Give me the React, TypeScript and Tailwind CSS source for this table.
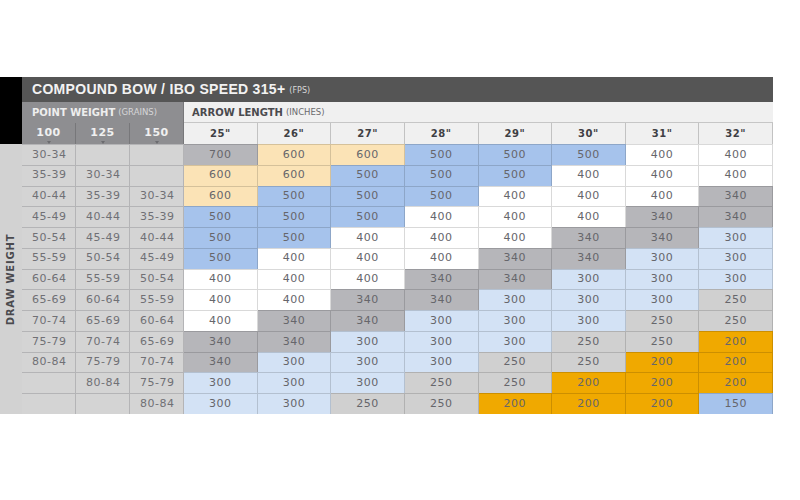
import React from 'react';

type Cell = number;

const ROWS: { w: [string, string, string]; v: Cell[] }[] = [
  { w: ['30-34', '', ''], v: [700, 600, 600, 500, 500, 500, 400, 400] },
  { w: ['35-39', '30-34', ''], v: [600, 600, 500, 500, 500, 400, 400, 400] },
  { w: ['40-44', '35-39', '30-34'], v: [600, 500, 500, 500, 400, 400, 400, 340] },
  { w: ['45-49', '40-44', '35-39'], v: [500, 500, 500, 400, 400, 400, 340, 340] },
  { w: ['50-54', '45-49', '40-44'], v: [500, 500, 400, 400, 400, 340, 340, 300] },
  { w: ['55-59', '50-54', '45-49'], v: [500, 400, 400, 400, 340, 340, 300, 300] },
  { w: ['60-64', '55-59', '50-54'], v: [400, 400, 400, 340, 340, 300, 300, 300] },
  { w: ['65-69', '60-64', '55-59'], v: [400, 400, 340, 340, 300, 300, 300, 250] },
  { w: ['70-74', '65-69', '60-64'], v: [400, 340, 340, 300, 300, 300, 250, 250] },
  { w: ['75-79', '70-74', '65-69'], v: [340, 340, 300, 300, 300, 250, 250, 200] },
  { w: ['80-84', '75-79', '70-74'], v: [340, 300, 300, 300, 250, 250, 200, 200] },
  { w: ['', '80-84', '75-79'], v: [300, 300, 300, 250, 250, 200, 200, 200] },
  { w: ['', '', '80-84'], v: [300, 300, 250, 250, 200, 200, 200, 150] },
];

const LENGTHS = ['25"', '26"', '27"', '28"', '29"', '30"', '31"', '32"'];

const COLOR: Record<number, string> = {
  700: 'bg-[#b6b6ba]',
  600: 'bg-[#fbe3b6]',
  500: 'bg-[#a6c3ec]',
  400: 'bg-white',
  340: 'bg-[#b6b6ba]',
  300: 'bg-[#d3e2f5]',
  250: 'bg-[#d0d0d0]',
  200: 'bg-[#f0a900]',
  150: 'bg-[#a6c3ec]',
};

export default function App() {
  return (
    <div className="w-[800px] h-[500px] bg-white pt-[77px]" style={{ fontFamily: "'DejaVu Sans', sans-serif" }}>
      <div className="flex w-[773px]">
        {/* left rail */}
        <div className="w-[22px] flex flex-col shrink-0">
          <div className="h-[67px] bg-black" />
          <div className="h-[270px] bg-[#d2d2d2] flex items-center justify-center">
            <span className="-rotate-90 whitespace-nowrap text-[10px] font-bold tracking-[0.8px] text-[#4a4a4e]">
              DRAW WEIGHT
            </span>
          </div>
        </div>

        {/* table */}
        <div className="flex-1 grid grid-cols-[54px_54px_54px_repeat(8,1fr)]">
          <div className="col-span-11 h-[25px] bg-[#555555] flex items-center pl-[10px] text-[#f2f2f2]">
            <span className="text-[14px] font-bold tracking-[0.3px] font-['Liberation_Sans',sans-serif]">
              COMPOUND BOW / IBO SPEED 315+
            </span>
            <span className="text-[8px] ml-[4px] mt-[3px] text-[#d8d8d8]">(FPS)</span>
          </div>

          <div className="col-span-3 h-[21px] bg-[#8e8e91] flex items-center pl-[10px] text-[#eeeeee] border-r border-[#77777a]">
            <span className="text-[10px] font-bold">POINT WEIGHT</span>
            <span className="text-[8.5px] ml-[3px] text-[#d6d6d8]">(GRAINS)</span>
          </div>
          <div className="col-span-8 h-[21px] bg-[#f0f0f0] flex items-center pl-[8px] text-[#4a4a4e] border-b border-[#c6c6c6]">
            <span className="text-[10px] font-bold">ARROW LENGTH</span>
            <span className="text-[8.5px] ml-[3px] text-[#6a6a6e]">(INCHES)</span>
          </div>

          {['100', '125', '150'].map((g) => (
            <div
              key={g}
              className="relative h-[21px] bg-[#8e8e91] flex items-center justify-center text-[11px] font-semibold text-[#f0f0f0] tracking-[0.5px] border-r border-[#77777a]"
            >
              {g}
              <span className="absolute bottom-0 left-1/2 -translate-x-1/2 w-0 h-0 border-l-[2px] border-r-[2px] border-t-[3px] border-l-transparent border-r-transparent border-t-[#6c6c70]" />
            </div>
          ))}
          {LENGTHS.map((l) => (
            <div
              key={l}
              className="h-[21px] bg-[#f0f0f0] flex items-center justify-center text-[10px] font-bold text-[#3f3f44] tracking-[0.5px] border-r border-[#c2c2c2] last:border-r-0"
            >
              {l}
            </div>
          ))}

          {ROWS.map((r, i) => (
            <React.Fragment key={i}>
              {r.w.map((w, j) => (
                <div
                  key={'w' + j}
                  className="h-[20.77px] bg-[#d4d4d4] flex items-center pl-[10px] text-[11px] text-[#707075] tracking-[0.5px] border-r border-t border-[#b4b4b6]"
                >
                  {w}
                </div>
              ))}
              {r.v.map((v, j) => (
                <div
                  key={'v' + j}
                  className={`h-[20.77px] ${COLOR[v]} flex items-center justify-center text-[11px] text-[#66666b] tracking-[0.5px] border-r border-t border-black/15`}
                >
                  {v}
                </div>
              ))}
            </React.Fragment>
          ))}
        </div>
      </div>
    </div>
  );
}
